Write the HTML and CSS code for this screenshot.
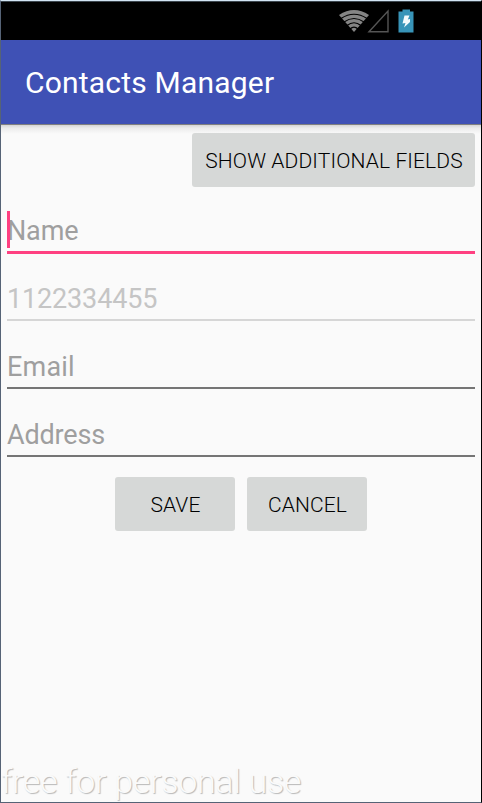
FILE: index.html
```html
<!DOCTYPE html>
<html lang="en">
<head>
<meta charset="utf-8">
<title>Contacts Manager</title>
<link rel="stylesheet" href="styles.css">
</head>
<body>
<div class="device">
  <div class="status">
    <svg class="status-icons" width="76" height="26" viewBox="0 0 76 26">
      <path d="M0 6Q15-4 30 6L15 23Z" fill="#858585"/>
      <path d="M2 9.500Q15 1 28 9.500M5 13Q15 6 25 13M8 16.500Q15 11 22 16.500M11 20Q15 16 19 20" fill="none" stroke="#000" stroke-width="1.200"/>
      <path d="M30 22.800L49 2V22.800Z" fill="none" stroke="#555" stroke-width="1.400"/>
      <path d="M59.500 2.500H63.500V.5H71V2.500H74.500V23.500H59.500Z" fill="#3894b8"/>
      <path d="M65.500 6.500H70.500L68.800 10.500L71 10V13L65 18.500L66.500 14L63.500 14.500Z" fill="#f4fafc"/>
    </svg>
  </div>
  <header class="appbar"><h1 class="title">Contacts Manager</h1></header>
  <main class="content">
    <div class="top-actions"><button class="btn btn-wide">SHOW ADDITIONAL FIELDS</button></div>
    <form class="form">
      <div class="field focused"><span class="hint">Name</span><i class="caret"></i></div>
      <div class="field disabled"><span class="hint">1122334455</span></div>
      <div class="field"><span class="hint hint-email">Email</span></div>
      <div class="field"><span class="hint">Address</span></div>
    </form>
    <div class="actions">
      <button class="btn">SAVE</button>
      <button class="btn">CANCEL</button>
    </div>
    <div class="watermark">free for personal use</div>
  </main>
</div>
</body>
</html>
```
FILE: styles.css
```css
* { box-sizing: border-box; }
body { margin: 0; font-family: Roboto, "Liberation Sans", sans-serif; }
.device {
  width: 482px; height: 803px;
  display: flex; flex-direction: column;
  border-top: 1px solid #d3e5f4;
  border-left: 1px solid #566376;
  border-right: 1px solid #000;
  border-bottom: 1px solid #566376;
  background: #fafafa;
  overflow: hidden;
}
.status {
  height: 39px; flex: none;
  background: #000;
  border-top: 1px solid #3d474f;
  padding: 7px 66px 0 0;
  display: flex; justify-content: flex-end;
}
.appbar {
  height: 84px; flex: none;
  background: #3f51b5;
  display: flex; align-items: center;
  padding: 2px 0 0 24px;
}
.title {
  margin: 0; color: #fff;
  font-size: 30px; font-weight: 400; line-height: 36px;
  letter-spacing: 0.2px;
}
.content {
  flex: 1;
  display: flex; flex-direction: column;
  padding: 9px 6px 0;
  background: linear-gradient(#7f7f7f 0 1px, #d5d5d5 1px, #ebebeb 4px, #fafafa 10px);
}
.top-actions { display: flex; justify-content: flex-end; }
.btn {
  width: 120px; height: 54px;
  border: 0; border-radius: 3px; padding: 2px 0 0 1px;
  background: #d6d8d7; color: #000;
  font: 300 21px/52px Roboto, sans-serif;
  letter-spacing: 0.12px;
  text-align: center; white-space: nowrap;
}
.btn-wide { width: 283px; }
.form { display: flex; flex-direction: column; }
.field {
  position: relative;
  height: 68px;
  border-bottom: 2px solid #757575;
  display: flex; align-items: flex-end;
  padding-bottom: 4px;
  color: #9f9f9f;
}
.focused { height: 67px; border-bottom: 3px solid #ff4081; }
.focused + .field { height: 67px; }
.disabled { border-color: #d6d6d6; color: #c5c5c5; }
.hint { font-size: 27px; line-height: 32px; letter-spacing: -0.15px; }
.hint-email { letter-spacing: 0.2px; }
.caret { position: absolute; left: 0; bottom: 3px; width: 3px; height: 37px; background: #ff4081; }
.actions { display: flex; justify-content: center; gap: 12px; margin-top: 20px; }
.watermark {
  margin: auto 0 0 -6px;
  font-size: 34px; line-height: 42px; font-weight: 300;
  letter-spacing: -0.3px;
  color: #fafafa; text-shadow: 1px 1px 1px #b8b8b8;
  white-space: nowrap;
}
```
